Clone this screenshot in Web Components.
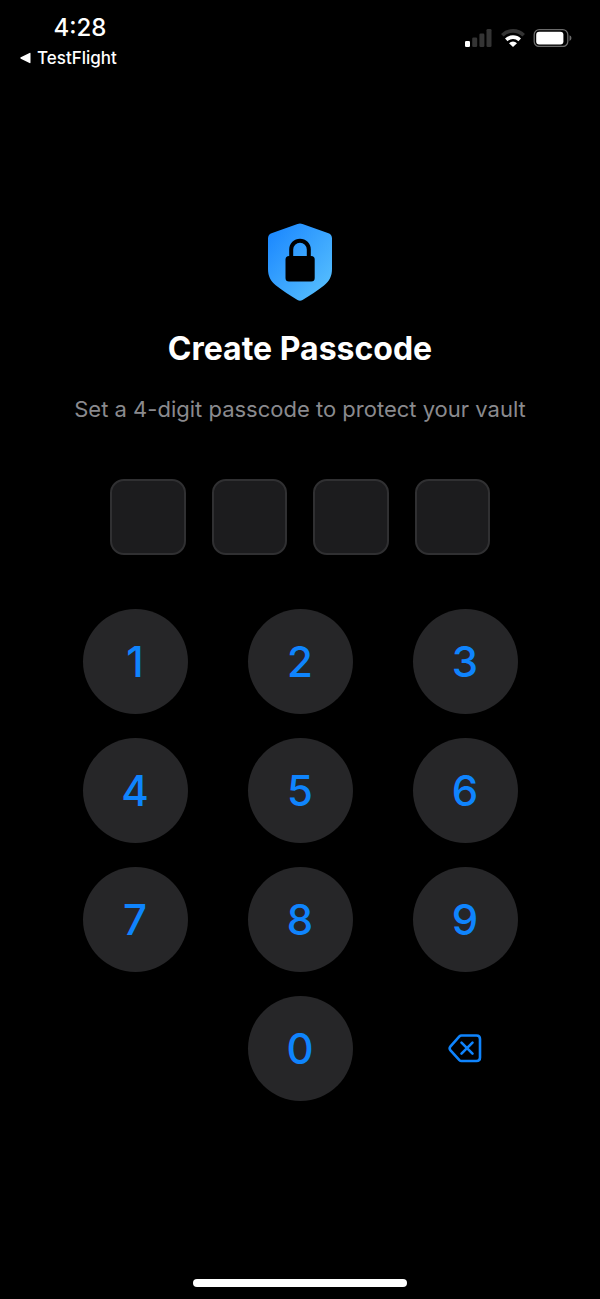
<!DOCTYPE html>
<html lang="en">
<head>
<meta charset="UTF-8">
<meta name="viewport" content="width=device-width, initial-scale=1">
<title>Create Passcode</title>
<style>
    body {
        margin: 0;
        background: #000;
        color: #fff;
        font-family: Inter, "Liberation Sans", sans-serif;
    }
</style>
</head>
<body>
<passcode-screen></passcode-screen>

<script>
class StatusBar extends HTMLElement {
    constructor() {
        super();

        this.attachShadow({ mode: "open" }).innerHTML = `
            <style>
                :host {
                    display: flex;
                    justify-content: space-between;
                    align-items: flex-start;
                    padding: 12px 28px 0 20px;
                }
                .left {
                    display: flex;
                    flex-direction: column;
                    min-width: 120px;
                }
                .time {
                    font-size: 24px;
                    line-height: 32px;
                    font-weight: 500;
                    text-align: center;
                }
                .back {
                    display: flex;
                    align-items: center;
                    gap: 6px;
                    color: inherit;
                    font-size: 17px;
                    line-height: 28px;
                    font-weight: 500;
                    text-decoration: none;
                }
                .icons {
                    display: flex;
                    gap: 8px;
                    padding-top: 17px;
                }
                svg {
                    display: block;
                }
            </style>
            <div class="left">
                <span class="time"><slot name="time"></slot></span>
                <a class="back" href="#back">
                    <svg width="11" height="12" viewBox="0 0 11 12" aria-hidden="true">
                        <path d="M10.500 1.500v9q0 1-1 .5L.8 6.700q-1-.7 0-1.400L9.500 1q1-.5 1 .5z" fill="#fff"/>
                    </svg>
                    <slot name="back"></slot>
                </a>
            </div>
            <div class="icons">
                <svg width="28" height="18" viewBox="0 0 28 18" aria-hidden="true">
                    <rect x="0" y="12" width="5" height="6" rx="1.300" fill="#fff"/>
                    <g fill="#343434">
                        <rect x="7.200" y="8.500" width="5" height="9.500" rx="1.300"/>
                        <rect x="14.400" y="4.500" width="5" height="13.500" rx="1.300"/>
                        <rect x="21.500" y="0" width="5" height="18" rx="1.300"/>
                    </g>
                </svg>
                <svg width="24" height="18" viewBox="0 0 24 18" aria-hidden="true">
                    <g fill="none" stroke-width="3.600">
                        <path d="M1.300 6.300a15.200 15.200 0 0 1 21.400 0" stroke="#343434"/>
                        <path d="M5.300 10.900a9.500 9.500 0 0 1 13.400 0" stroke="#fff"/>
                    </g>
                    <path d="M12 18L8 14.200a5.700 5.700 0 0 1 8 0z" fill="#fff"/>
                </svg>
                <svg width="39" height="18" viewBox="0 0 39 18" aria-hidden="true">
                    <rect x="1.200" y=".7" width="33.600" height="16.800" rx="5" fill="none" stroke="#6a6a6a" stroke-width="1.300"/>
                    <rect x="3.200" y="2.800" width="27.200" height="12.600" rx="3" fill="#fff"/>
                    <path d="M36.500 6.300q2 .8 2 2.800t-2 2.800z" fill="#6a6a6a"/>
                </svg>
            </div>
        `;
    }
}

class ShieldIcon extends HTMLElement {
    constructor() {
        super();

        this.attachShadow({ mode: "open" }).innerHTML = `
            <style>
                :host {
                    display: block;
                }
                svg {
                    display: block;
                }
            </style>
            <svg width="64" height="78" viewBox="0 0 64 78" aria-hidden="true">
                <defs>
                    <linearGradient id="fill" x1="0" y1="0" x2="1" y2="1">
                        <stop offset="0" stop-color="#1784ff"/>
                        <stop offset="1" stop-color="#5cc4fd"/>
                    </linearGradient>
                </defs>
                <path d="M29.500 1Q32 0 34.500 1L60.500 10.300Q64 11.700 64 15.500V46C64 53 61.500 58 56 62.500C49.500 67.800 42 72.500 34.500 77Q32 78.500 29.500 77C22 72.500 14.500 67.800 8 62.500C2.500 58 0 53 0 46V15.500Q0 11.700 3.500 10.300Z" fill="url(#fill)"/>
                <path d="M23.200 35V26.500a8.800 8.800 0 0 1 17.600 0V35" fill="none" stroke="#000" stroke-width="4"/>
                <rect x="17.500" y="33" width="29.200" height="25.500" rx="3.500" fill="#000"/>
            </svg>
        `;
    }
}

class CodeBoxes extends HTMLElement {
    #value = "";

    constructor() {
        super();

        this.attachShadow({ mode: "open" }).innerHTML = `
            <style>
                :host {
                    display: grid;
                    grid-template-columns: repeat(4, 1fr);
                    gap: 26px;
                    width: 100%;
                    max-width: 380px;
                }
                input {
                    box-sizing: border-box;
                    width: 100%;
                    aspect-ratio: 1;
                    margin: 0;
                    padding: 0;
                    border: 2px solid #303032;
                    border-radius: 14px;
                    outline: none;
                    background: #1c1c1e;
                    color: #fff;
                    font-family: inherit;
                    font-size: 32px;
                    text-align: center;
                }
            </style>
            ${[1, 2, 3, 4].map(n => `<input type="password" readonly aria-label="Digit ${n}">`).join("")}
        `;
    }

    get value() {
        return this.#value;
    }

    set value(val) {
        this.#value = val.slice(0, 4);
        this.shadowRoot.querySelectorAll("input").forEach((box, i) => {
            box.value = this.#value[i] || "";
        });
    }
}

class KeypadKey extends HTMLElement {
    constructor() {
        super();

        this.attachShadow({ mode: "open" }).innerHTML = `
            <style>
                :host {
                    display: block;
                }
                button {
                    display: flex;
                    align-items: center;
                    justify-content: center;
                    width: 100%;
                    height: 105px;
                    margin: 0;
                    padding: 0;
                    border: 0;
                    border-radius: 50%;
                    background: #262628;
                    color: #0f84fd;
                    font-family: inherit;
                    font-size: 42px;
                    font-weight: 500;
                    cursor: pointer;
                }
                :host([plain]) button {
                    background: none;
                }
            </style>
            <button type="button"><slot></slot></button>
        `;
    }

    connectedCallback() {
        const key = this.getAttribute("key");
        const button = this.shadowRoot.querySelector("button");

        if (key === "delete") {
            button.setAttribute("aria-label", "Delete");
        }

        button.addEventListener("click", () => {
            this.dispatchEvent(new CustomEvent("key-press", { bubbles: true, composed: true, detail: { key } }));
        });
    }
}

class NumberPad extends HTMLElement {
    constructor() {
        super();

        const digit = n => `<keypad-key key="${n}">${n}</keypad-key>`;

        this.attachShadow({ mode: "open" }).innerHTML = `
            <style>
                :host {
                    display: grid;
                    grid-template-columns: repeat(3, 105px);
                    justify-content: space-between;
                    row-gap: 24px;
                    width: 100%;
                    max-width: 435px;
                }
            </style>
            ${[1, 2, 3, 4, 5, 6, 7, 8, 9].map(digit).join("")}
            <span></span>
            ${digit(0)}
            <keypad-key key="delete" plain>
                <svg width="34" height="30" viewBox="0 0 34 30" fill="none" stroke="#0f84fd" stroke-width="2.600" stroke-linecap="round" stroke-linejoin="round" aria-hidden="true">
                    <path d="M13.500 2.500H28.500Q32 2.500 32 6V24.500Q32 28 28.500 28H13.500Q12.300 28 11.400 27.100L2.500 17.300Q.8 15.300 2.500 13.300L11.400 3.400Q12.300 2.500 13.500 2.500Z"/>
                    <path d="M13.500 9.700l11 11M24.500 9.700l-11 11"/>
                </svg>
            </keypad-key>
        `;
    }
}

class PasscodeScreen extends HTMLElement {
    constructor() {
        super();

        this.attachShadow({ mode: "open" }).innerHTML = `
            <style>
                :host {
                    display: flex;
                    flex-direction: column;
                    min-height: 100vh;
                }
                main {
                    display: flex;
                    flex-direction: column;
                    align-items: center;
                    padding: 151px 24px 48px;
                }
                h1 {
                    margin: 28px 0 0;
                    font-size: 32px;
                    line-height: 40px;
                    font-weight: 700;
                    text-align: center;
                }
                p {
                    margin: 24px 0 0;
                    color: #8a8a8e;
                    font-size: 22px;
                    line-height: 32px;
                    text-align: center;
                }
                code-boxes {
                    margin-top: 54px;
                }
                number-pad {
                    margin-top: 54px;
                }
                .home {
                    width: 100%;
                    max-width: 214px;
                    height: 8px;
                    margin: auto auto 12px;
                    border-radius: 4px;
                    background: #fff;
                }
            </style>
            <status-bar>
                <span slot="time">4:28</span>
                <span slot="back">TestFlight</span>
            </status-bar>
            <main>
                <shield-icon></shield-icon>
                <h1>Create Passcode</h1>
                <p>Set a 4-digit passcode to protect your vault</p>
                <code-boxes></code-boxes>
                <number-pad></number-pad>
            </main>
            <div class="home"></div>
        `;
    }

    connectedCallback() {
        const boxes = this.shadowRoot.querySelector("code-boxes");

        this.shadowRoot.addEventListener("key-press", e => {
            const key = e.detail.key;
            boxes.value = key === "delete" ? boxes.value.slice(0, -1) : boxes.value + key;
        });
    }
}

window.customElements.define("status-bar", StatusBar);
window.customElements.define("shield-icon", ShieldIcon);
window.customElements.define("code-boxes", CodeBoxes);
window.customElements.define("keypad-key", KeypadKey);
window.customElements.define("number-pad", NumberPad);
window.customElements.define("passcode-screen", PasscodeScreen);
</script>
</body>
</html>
